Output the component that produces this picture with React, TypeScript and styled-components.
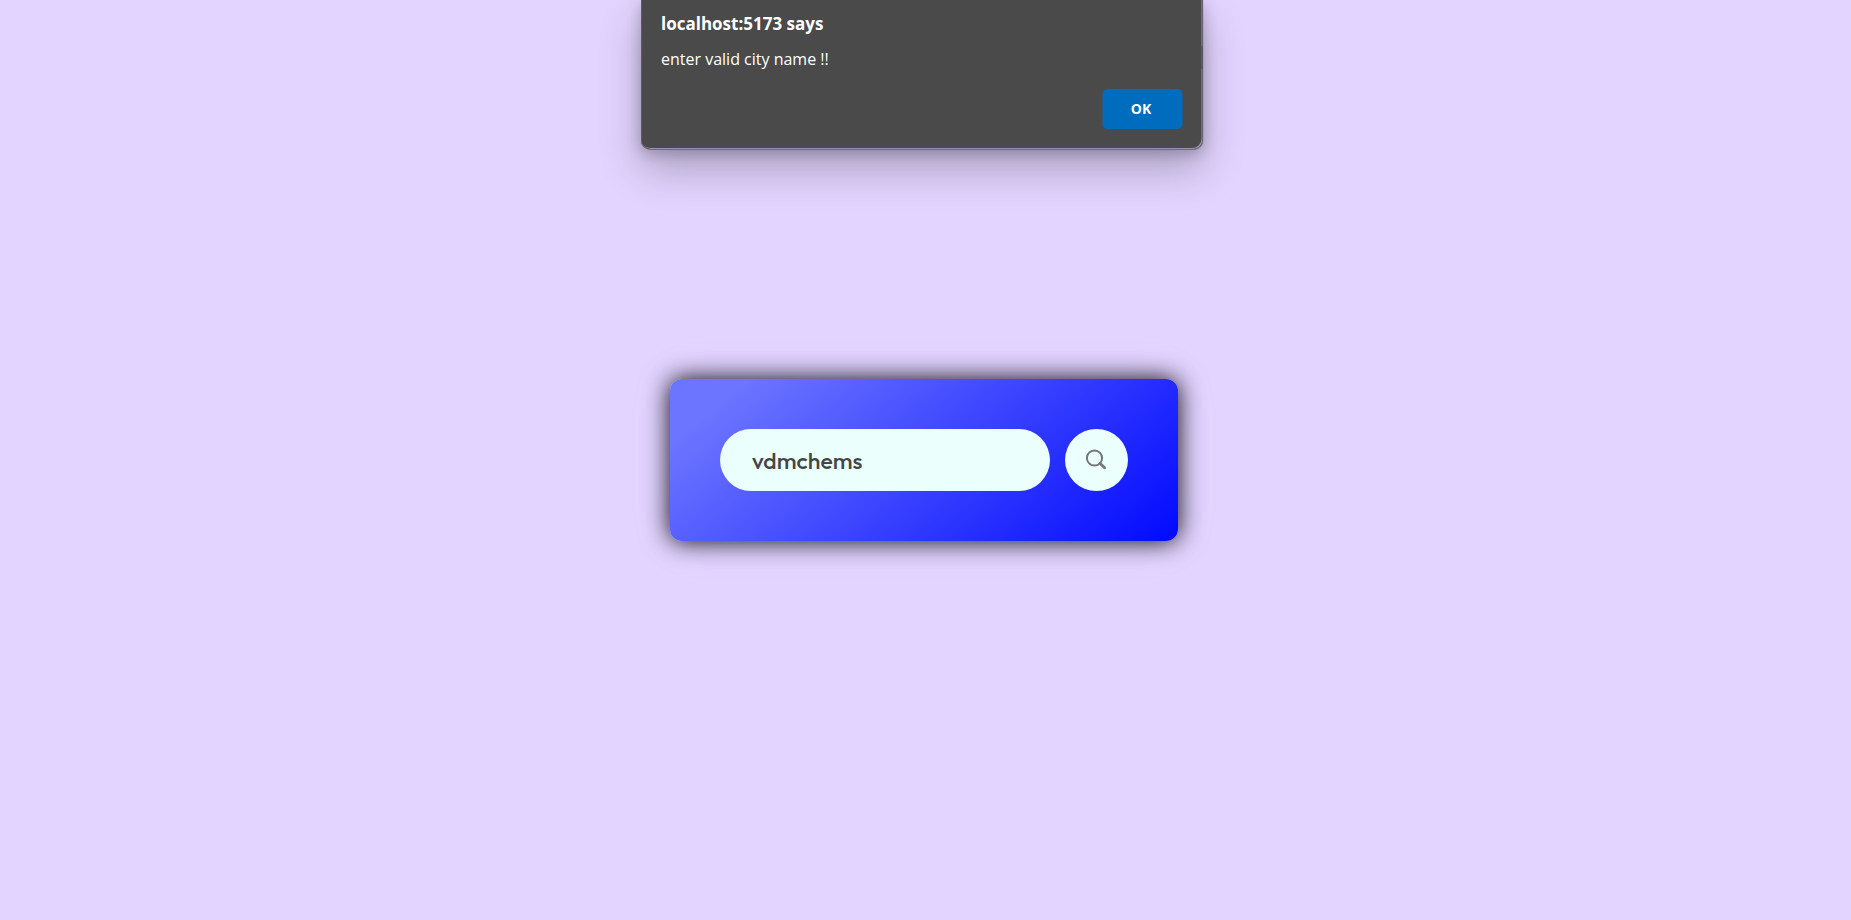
import React, { useState } from 'react';
import styled, { createGlobalStyle } from 'styled-components';

const GlobalStyle = createGlobalStyle`
  *, *::before, *::after { box-sizing: border-box; }
  body { margin: 0; background: #e3d4ff; }
  button, input { font: inherit; border: 0; margin: 0; }
`;

const Page = styled.main`
  display: grid;
  place-items: center;
  min-height: 100vh;
  padding-right: 3px;
`;

const Card = styled.form`
  display: flex;
  gap: 15px;
  width: 508px;
  max-width: 100%;
  padding: 50px;
  border-radius: 12px;
  background: linear-gradient(140deg, #6c75ff 11%, #0008ff 101%);
  box-shadow: 0 0 24px rgba(0, 0, 0, 0.95), 0 0 40px rgba(80, 100, 180, 0.15);
`;

const CityInput = styled.input`
  flex: 1;
  min-width: 0;
  height: 62px;
  padding: 0 32px;
  border-radius: 31px;
  outline: none;
  background: #ebfffc;
  color: #454545;
  font-family: Outfit, Lato, sans-serif;
  font-size: 23px;
  font-weight: 500;
`;

const SearchButton = styled.button`
  display: grid;
  place-items: center;
  flex: none;
  width: 63px;
  height: 62px;
  padding: 0 2px 0 0;
  border-radius: 50%;
  background: #ebfffc;
  color: #747776;
  cursor: pointer;
`;

const Dialog = styled.section`
  position: absolute;
  top: 0;
  left: calc(50% - 4px);
  transform: translateX(-50%);
  width: 563px;
  max-width: 100%;
  padding: 10px 20px;
  border: solid #716a7e;
  border-width: 0 1px 1px;
  border-radius: 0 0 10px 10px;
  background: #4a4a4a;
  box-shadow: inset -1px -1px 0 #9b91ac, 0 20px 42px rgba(0, 0, 0, 0.24), 0 4px 14px rgba(0, 0, 0, 0.2);
  color: #fff;
  font-family: "Segoe UI", "Open Sans", sans-serif;

  &::after {
    content: "";
    position: absolute;
    top: 46px;
    right: 0;
    width: 1px;
    height: 23px;
    background: #4a4a4a;
  }
`;

const DialogTitle = styled.h1`
  margin: 0;
  font-size: 17px;
  line-height: 28px;
  font-weight: 700;
`;

const DialogMessage = styled.p`
  margin: 8px 0 16px;
  font-size: 16px;
  line-height: 27px;
`;

const DialogActions = styled.div`
  display: flex;
  justify-content: flex-end;
  padding-bottom: 10px;
`;

const OkButton = styled.button`
  width: 80px;
  height: 40px;
  padding: 0 2px 2px 0;
  border-radius: 5px;
  background: #006cbe;
  color: #fff;
  font-size: 14px;
  font-weight: 700;
  cursor: pointer;
`;

export default function App() {
  const [city, setCity] = useState('vdmchems');
  const [open, setOpen] = useState(true);

  return (
    <Page>
      <GlobalStyle />
      <Card
        onSubmit={(event: React.FormEvent) => {
          event.preventDefault();
          setOpen(true);
        }}
      >
        <CityInput
          type="text"
          aria-label="City name"
          spellCheck={false}
          value={city}
          onChange={(event: React.ChangeEvent<HTMLInputElement>) => setCity(event.target.value)}
        />
        <SearchButton type="submit" aria-label="Search">
          <svg width="22" height="22" viewBox="0 0 22 22" fill="none" stroke="currentColor">
            <circle cx="9.5" cy="9" r="7.6" strokeWidth="2" />
            <path d="M15.2 14.6L19.6 18.8" strokeWidth="2.8" strokeLinecap="round" />
          </svg>
        </SearchButton>
      </Card>
      {open && (
        <Dialog role="alertdialog" aria-labelledby="alert-title" aria-describedby="alert-message">
          <DialogTitle id="alert-title">localhost:5173 says</DialogTitle>
          <DialogMessage id="alert-message">enter valid city name !!</DialogMessage>
          <DialogActions>
            <OkButton type="button" onClick={() => setOpen(false)}>OK</OkButton>
          </DialogActions>
        </Dialog>
      )}
    </Page>
  );
}
